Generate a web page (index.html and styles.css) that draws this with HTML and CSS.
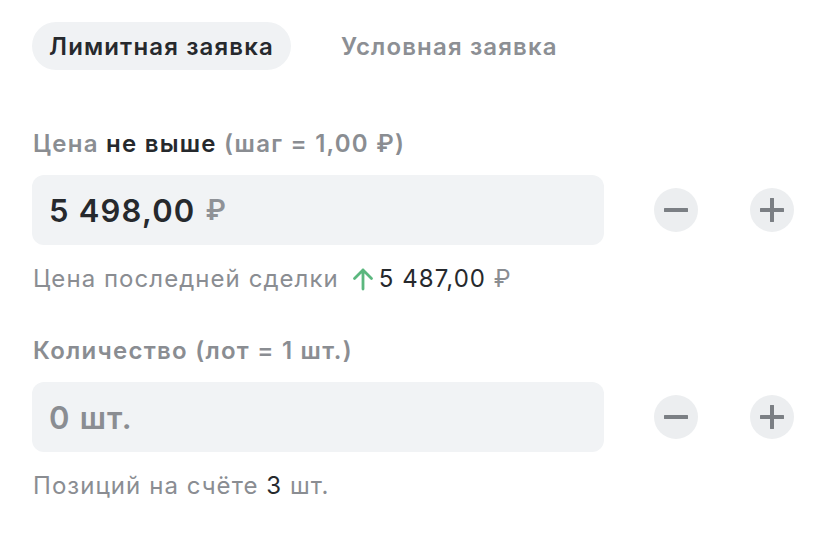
FILE: index.html
```html
<!DOCTYPE html>
<html lang="ru">
<head>
<meta charset="utf-8">
<link rel="stylesheet" href="styles.css">
</head>
<body>
<div class="panel">
  <div class="tabs">
    <div class="tab tab-active">Лимитная заявка</div>
    <div class="tab">Условная заявка</div>
  </div>

  <div class="field field-price">
    <div class="label">Цена <span class="strong">не выше</span> (шаг = 1,00 ₽)</div>
    <div class="row">
      <div class="input"><span class="value">5 498,00</span> <span class="unit">₽</span></div>
      <div class="steppers">
        <button class="step" aria-label="minus"><svg width="24" height="24" viewBox="0 0 24 24"><path d="M1 12H23" stroke="#7b7f84" stroke-width="4" stroke-linecap="round"/></svg></button>
        <button class="step" aria-label="plus"><svg width="24" height="24" viewBox="0 0 24 24"><path d="M1 12H23M12 1V23" stroke="#7b7f84" stroke-width="4" stroke-linecap="round"/></svg></button>
      </div>
    </div>
    <div class="hint">Цена последней сделки<svg class="arrow" width="22" height="24" viewBox="0 0 22 24"><path d="M11 22V3M2.5 11.5L11 3L19.5 11.5" fill="none" stroke="#5bb77e" stroke-width="2.8" stroke-linecap="round" stroke-linejoin="round"/></svg><span class="dark">5 487,00</span> ₽</div>
  </div>

  <div class="field field-qty">
    <div class="label">Количество (лот = 1 шт.)</div>
    <div class="row">
      <div class="input"><span class="placeholder">0 шт.</span></div>
      <div class="steppers">
        <button class="step" aria-label="minus"><svg width="24" height="24" viewBox="0 0 24 24"><path d="M1 12H23" stroke="#7b7f84" stroke-width="4" stroke-linecap="round"/></svg></button>
        <button class="step" aria-label="plus"><svg width="24" height="24" viewBox="0 0 24 24"><path d="M1 12H23M12 1V23" stroke="#7b7f84" stroke-width="4" stroke-linecap="round"/></svg></button>
      </div>
    </div>
    <div class="hint">Позиций на счёте <span class="dark">3</span> шт.</div>
  </div>
</div>
</body>
</html>
```

FILE: styles.css
```css
* { box-sizing: border-box; }
html, body { margin: 0; padding: 0; background: #ffffff; }
body {
  font-family: Inter, "Noto Sans", "DejaVu Sans", sans-serif;
  color: #8a8d92;
}
.panel {
  width: 828px;
  height: 547px;
  padding: 22px 34px 0 32px;
}
.tabs {
  display: flex;
  align-items: center;
  gap: 50px;
}
.tab {
  height: 48px;
  padding: 0 17px;
  border-radius: 24px;
  display: flex;
  align-items: center;
  font-size: 24px;
  font-weight: 600;
  color: #8c8f94;
  letter-spacing: 1.15px;
}
.tab + .tab { padding-left: 0; }
.tab-active {
  background: #f0f2f4;
  color: #26292d;
}
.field { display: flex; flex-direction: column; }
.field-price { margin-top: 60px; }
.field-qty { margin-top: 44px; }
.label {
  font-size: 24px;
  line-height: 28px;
  font-weight: 600;
  letter-spacing: 1.25px;
  color: #8a8d92;
  padding-left: 1px;
}
.strong { color: #26292d; }
.row {
  display: flex;
  align-items: center;
  margin-top: 17px;
}
.input {
  width: 572px;
  height: 70px;
  border-radius: 12px;
  background: #f1f3f5;
  display: flex;
  align-items: center;
  gap: 10px;
  padding-left: 17px;
  font-size: 31px;
  font-weight: 600;
  letter-spacing: 1.2px;
}
.value { color: #26292d; }
.unit { color: #8f9297; font-size: 28px; }
.placeholder { color: #8a8d92; }
.steppers {
  display: flex;
  gap: 52px;
  margin-left: 50px;
}
.step {
  width: 44px;
  height: 44px;
  border: none;
  border-radius: 50%;
  background: #eceef0;
  padding: 0;
  display: flex;
  align-items: center;
  justify-content: center;
}
.hint {
  margin-top: 20px;
  font-size: 24px;
  line-height: 28px;
  letter-spacing: 1.05px;
  color: #8a8d92;
  display: flex;
  align-items: center;
  padding-left: 1px;
  white-space: pre;
}
.dark { color: #26292d; }
.arrow { margin: 0 5px 0 13px; }
```
